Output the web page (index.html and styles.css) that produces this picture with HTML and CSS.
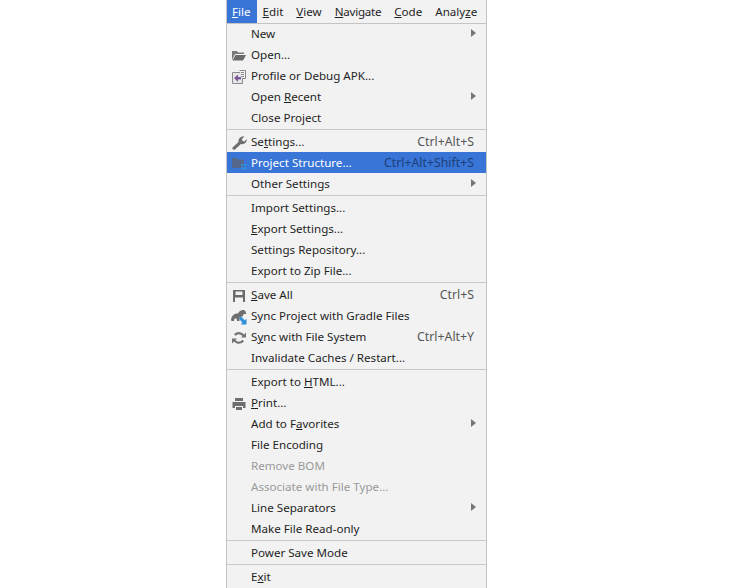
FILE: index.html
```
<!DOCTYPE html>
<html lang="en">
<head>
<meta charset="utf-8">
<title>File menu</title>
<link rel="stylesheet" href="styles.css">
</head>
<body>
<div class="window">
  <nav class="menubar">
    <span class="top active"><u>F</u>ile</span>
    <span class="top"><u>E</u>dit</span>
    <span class="top"><u>V</u>iew</span>
    <span class="top tight"><u>N</u>avigate</span>
    <span class="top"><u>C</u>ode</span>
    <span class="top">Analy<u>z</u>e</span>
  </nav>
  <div class="menu">
    <div class="row"><span class="ico"></span><span class="label">New</span><span class="arrow"></span></div>
    <div class="row"><span class="ico"><svg width="16" height="16" viewBox="0 0 16 16"><path d="M1 3h5l1 1.500h6V6H4L1 12z" fill="#7a7a7a"/><path d="M4.500 7H15l-3 5.500H1.500z" fill="#6a6a6a"/></svg></span><span class="label">Open...</span></div>
    <div class="row"><span class="ico"><svg width="16" height="16" viewBox="0 0 16 16"><path d="M1.500 3.500h10v11h-10z" fill="#e6e6e6" stroke="#8a8a8a"/><path d="M8.500 1.500h6v8h-3" fill="#f4f4f4" stroke="#8a8a8a"/><path d="M10 3.500h3M10 5.500h3M10 7.500h3" stroke="#8a8a8a"/><path d="M3 9l4-3.500V8h3v2.500H7V13z" fill="#7d5a96"/></svg></span><span class="label">Profile or Debug APK...</span></div>
    <div class="row"><span class="ico"></span><span class="label">Open <u>R</u>ecent</span><span class="arrow"></span></div>
    <div class="row"><span class="ico"></span><span class="label">Close Project</span></div>
    <div class="sep"></div>
    <div class="row"><span class="ico"><svg width="16" height="16" viewBox="0 0 16 16"><path d="M1.500 12.500 7.500 7C7 4 9.500 1 13.500 1.300L11 4l.5 2 2 .5 2.200-2.500c.3 3.500-2.700 5.800-5.700 5L4 14.500c-1.200.6-3.400-.5-2.500-2z" fill="#6e6e6e"/></svg></span><span class="label">Se<u>t</u>tings...</span><span class="key">Ctrl+Alt+S</span></div>
    <div class="row selected"><span class="ico"><svg width="16" height="16" viewBox="0 0 16 16"><path d="M1 3h5l1.500 1.500H13V13H1z" fill="#56688a"/><path d="M10 9h2.500v2H10zM13 9h2.500v2H13zM10 12h2.500v2.500H10zM13 12h2.500v2.500H13z" fill="#2f8fe0"/></svg></span><span class="label">Project Structure...</span><span class="key">Ctrl+Alt+Shift+S</span></div>
    <div class="row"><span class="ico"></span><span class="label">Other Settings</span><span class="arrow"></span></div>
    <div class="sep"></div>
    <div class="row"><span class="ico"></span><span class="label">Import Settings...</span></div>
    <div class="row"><span class="ico"></span><span class="label"><u>E</u>xport Settings...</span></div>
    <div class="row"><span class="ico"></span><span class="label">Settings Repository...</span></div>
    <div class="row"><span class="ico"></span><span class="label">Export to Zip File...</span></div>
    <div class="sep"></div>
    <div class="row"><span class="ico"><svg width="16" height="16" viewBox="0 0 16 16"><path fill-rule="evenodd" d="M2 2h12v12H2zM4.500 3.500V7h7V3.500zM4 9.500V14h8V9.500z" fill="#6a6a6a"/></svg></span><span class="label"><u>S</u>ave All</span><span class="key">Ctrl+S</span></div>
    <div class="row"><span class="ico"><svg width="16" height="16" viewBox="0 0 16 16"><path d="M0 10C1 6 4 4 7 4.500 8.500 1 13 0 14.500 2.500L15.500 5 12.500 5 12 7 8.500 8.500 8.500 12H6L5.500 9.500H3.500L3 12H.5z" fill="#6e6e6e"/><path d="M10 7.500 14 11.500 15.500 9.500V15.500H9.500L11.500 14 8 9.500z" fill="#2f8fd8"/></svg></span><span class="label">Sync Project with Gradle Files</span></div>
    <div class="row"><span class="ico"><svg width="16" height="16" viewBox="0 0 16 16"><path d="M13 6.500C12 3.500 7 1.500 3.800 5M3 9.500c1 3 6 5 9.200 1" fill="none" stroke="#747474" stroke-width="2.200"/><path d="M15 2.500v5h-5zM1 13.500v-5h5z" fill="#747474"/></svg></span><span class="label">S<u>y</u>nc with File System</span><span class="key">Ctrl+Alt+Y</span></div>
    <div class="row"><span class="ico"></span><span class="label">Invalidate Caches / Restart...</span></div>
    <div class="sep"></div>
    <div class="row"><span class="ico"></span><span class="label">Export to <u>H</u>TML...</span></div>
    <div class="row"><span class="ico"><svg width="16" height="16" viewBox="0 0 16 16"><path d="M4 2h8v3H4zM1.500 6h13v6H12v-2H4v2H1.500zM5 11h6v3H5z" fill="#6e6e6e"/></svg></span><span class="label"><u>P</u>rint...</span></div>
    <div class="row"><span class="ico"></span><span class="label">Add to F<u>a</u>vorites</span><span class="arrow"></span></div>
    <div class="row"><span class="ico"></span><span class="label">File Encoding</span></div>
    <div class="row disabled"><span class="ico"></span><span class="label">Remove BOM</span></div>
    <div class="row disabled"><span class="ico"></span><span class="label">Associate with File Type...</span></div>
    <div class="row"><span class="ico"></span><span class="label">Line Separators</span><span class="arrow"></span></div>
    <div class="row"><span class="ico"></span><span class="label">Make File Read-only</span></div>
    <div class="sep"></div>
    <div class="row"><span class="ico"></span><span class="label">Power Save Mode</span></div>
    <div class="sep"></div>
    <div class="row"><span class="ico"></span><span class="label">E<u>x</u>it</span></div>
  </div>
</div>
</body>
</html>
```
FILE: styles.css
```
html, body {
  margin: 0;
  padding: 0;
  background: #fff;
}
body {
  font-family: "Noto Sans", "Open Sans", sans-serif;
  font-size: 11.6px;
  color: #1f1f1f;
  height: 588px;
  overflow: hidden;
}
.window {
  width: 261px;
  margin-left: 226px;
  background: #f2f2f2;
  border-left: 1px solid #c4c4c4;
  border-right: 1px solid #c4c4c4;
  border-bottom: 1px solid #c4c4c4;
  box-sizing: border-box;
}
.menubar {
  display: flex;
  height: 24px;
  box-sizing: border-box;
  align-items: stretch;
  border-bottom: 1px solid #c4c4c4;
}
.top {
  display: flex;
  align-items: center;
  padding: 0 6px;
  margin-right: 1px;
}
.top.active {
  background: #3875d7;
  color: #fff;
  padding: 0 6px 0 5px;
  margin-right: 0;
}
.top.tight {
  letter-spacing: -0.25px;
}
.menu {
  display: flex;
  flex-direction: column;
}
.row {
  display: flex;
  align-items: center;
  height: 21px;
  padding-right: 12px;
}
.ico {
  width: 16px;
  height: 16px;
  margin: 0 4px 0 4px;
  flex: none;
}
.ico svg {
  display: block;
}
.label {
  flex: 1;
  white-space: nowrap;
  padding-bottom: 2px;
}
.key {
  color: #555;
  white-space: nowrap;
  font-size: 12.3px;
  padding-bottom: 2px;
}
.arrow {
  width: 0;
  height: 0;
  margin: 0 -2px 3px 0;
  border-left: 5px solid #777;
  border-top: 4px solid transparent;
  border-bottom: 4px solid transparent;
}
.selected {
  background: #3875d7;
  color: #fff;
  margin: -1px 0 1px;
}
.selected .label,
.selected .key {
  padding-bottom: 0;
}
.selected .key {
  color: #1f3f78;
}
.disabled {
  color: #9a9a9a;
}
.sep {
  height: 3px;
  box-sizing: border-box;
  border-top: 1px solid #c9c9c9;
}
```
